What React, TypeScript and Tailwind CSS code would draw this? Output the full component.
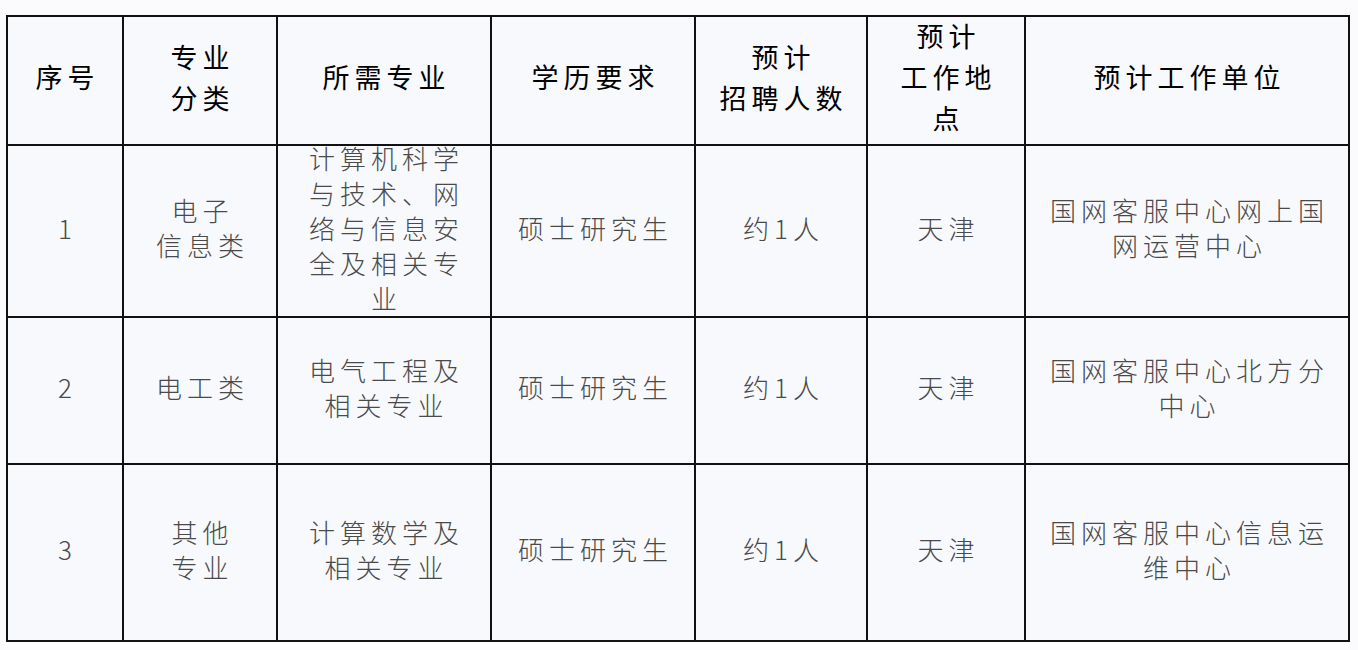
import React from "react";

const font = { fontFamily: '"Noto Sans CJK SC", "Noto Sans", sans-serif' };

const headers: string[][] = [
  ["序号"],
  ["专业", "分类"],
  ["所需专业"],
  ["学历要求"],
  ["预计", "招聘人数"],
  ["预计", "工作地", "点"],
  ["预计工作单位"],
];

const rows: string[][][] = [
  [
    ["1"],
    ["电子", "信息类"],
    ["计算机科学", "与技术、网", "络与信息安", "全及相关专", "业"],
    ["硕士研究生"],
    ["约1人"],
    ["天津"],
    ["国网客服中心网上国", "网运营中心"],
  ],
  [
    ["2"],
    ["电工类"],
    ["电气工程及", "相关专业"],
    ["硕士研究生"],
    ["约1人"],
    ["天津"],
    ["国网客服中心北方分", "中心"],
  ],
  [
    ["3"],
    ["其他", "专业"],
    ["计算数学及", "相关专业"],
    ["硕士研究生"],
    ["约1人"],
    ["天津"],
    ["国网客服中心信息运", "维中心"],
  ],
];

function Cell({ lines, header }: { lines: string[]; header?: boolean }) {
  return (
    <div className="bg-[#f8f9fd] flex items-center justify-center text-center overflow-visible pb-[8px]">
      <div
        className={
          header
            ? "text-[27px] leading-[41px] tracking-[5px] text-black font-normal"
            : "text-[26px] leading-[35px] tracking-[5px] text-[#4a4a4a] font-light"
        }
        style={font}
      >
        {lines.map((l, i) => (
          <div key={i} className="whitespace-nowrap pl-[5px]">
            {l}
          </div>
        ))}
      </div>
    </div>
  );
}

export default function App() {
  return (
    <div className="w-[1358px] h-[650px] bg-[#fbfbfd] pt-[15px] pl-[6px]">
      <div className="inline-grid grid-cols-[114px_152px_212px_202px_170px_156px_322px] grid-rows-[127px_170px_145px_175px] gap-[2px] p-[2px] bg-[#111111]">
        {headers.map((h, i) => (
          <Cell key={`h${i}`} lines={h} header />
        ))}
        {rows.map((r, ri) =>
          r.map((c, ci) => <Cell key={`r${ri}c${ci}`} lines={c} />)
        )}
      </div>
    </div>
  );
}
